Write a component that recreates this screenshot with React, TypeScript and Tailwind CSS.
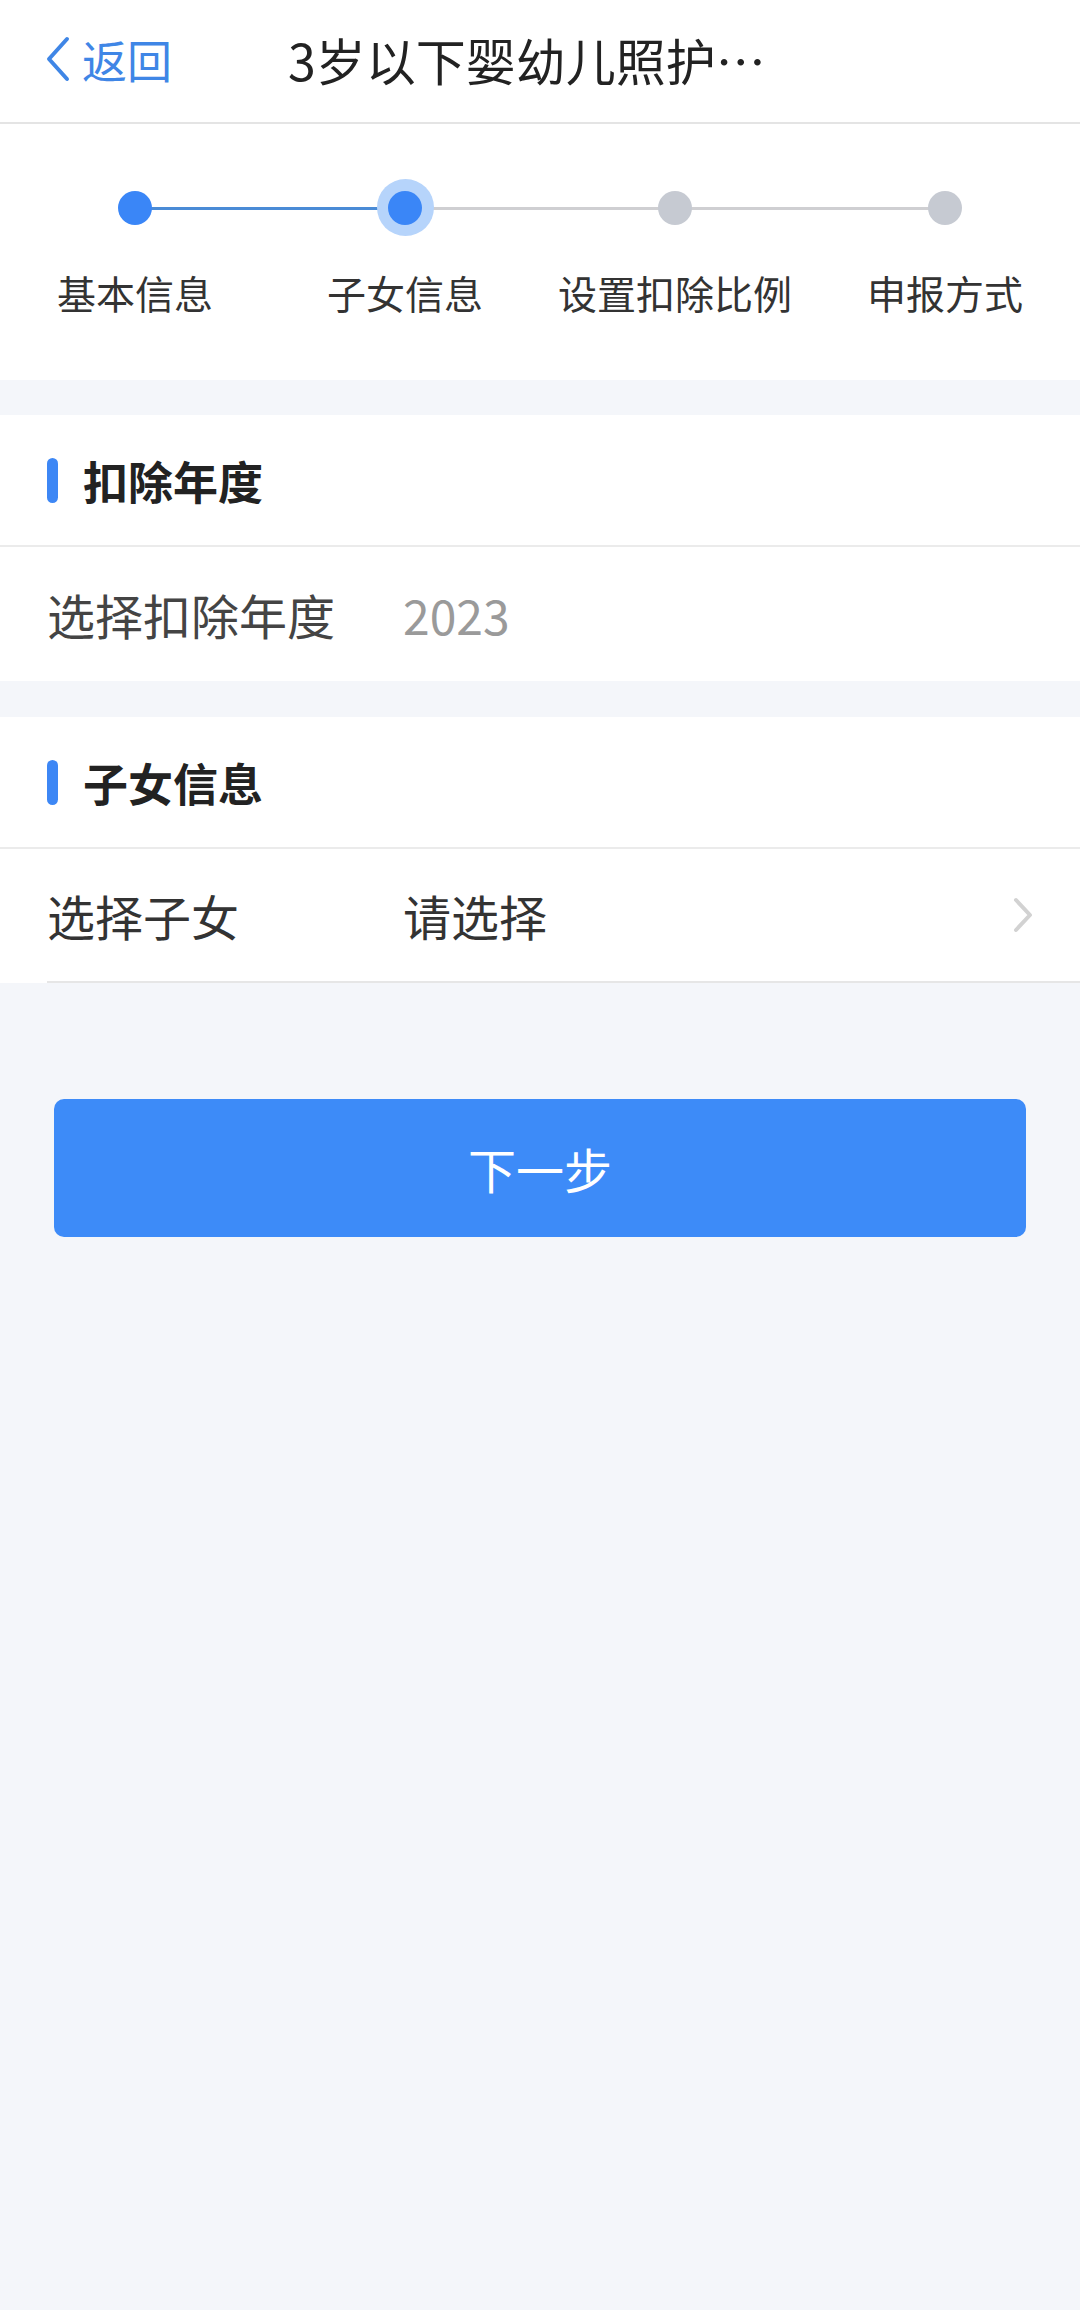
import React from "react";

const FONT = '"Noto Sans CJK SC", "Noto Sans", sans-serif';

const STEPS = ["基本信息", "子女信息", "设置扣除比例", "申报方式"];

const BackChevron = () => (
    <svg width="26" height="46" viewBox="0 0 26 46" fill="none">
        <path d="M23 3 L5 23 L23 43" stroke="#3f86e6" strokeWidth="4" strokeLinecap="round" strokeLinejoin="round" />
    </svg>
);

const RightChevron = () => (
    <svg width="22" height="36" viewBox="0 0 22 36" fill="none">
        <path d="M4 3 L18 18 L4 33" stroke="#d2d2d2" strokeWidth="4" strokeLinecap="round" strokeLinejoin="round" />
    </svg>
);

const Stepper = () => (
    <div className="bg-white h-[256px] pt-[55px]">
        <div className="relative h-[57px]">
            <div className="absolute left-[135px] w-[270px] top-[28px] h-[3px] bg-[#4a8bd6]" />
            <div className="absolute left-[405px] w-[540px] top-[28px] h-[3px] bg-[#cfcfd2]" />
            <div className="relative grid grid-cols-4 h-full">
                {STEPS.map((s, i) => (
                    <div key={s} className="flex items-center justify-center">
                        {i === 1 ? (
                            <div className="w-[57px] h-[57px] rounded-full bg-[#b6d4fb] flex items-center justify-center">
                                <div className="w-[34px] h-[34px] rounded-full bg-[#3a86f7]" />
                            </div>
                        ) : (
                            <div
                                className={
                                    i === 0
                                        ? "w-[34px] h-[34px] rounded-full bg-[#3a86f7]"
                                        : "w-[34px] h-[34px] rounded-full bg-[#c6cad2]"
                                }
                            />
                        )}
                    </div>
                ))}
            </div>
        </div>
        <div className="grid grid-cols-4 mt-[34px]">
            {STEPS.map((s) => (
                <div key={s} className="text-center text-[39px] leading-[44px] text-[#333]">
                    {s}
                </div>
            ))}
        </div>
    </div>
);

const SectionHeader = ({ title }: { title: string }) => (
    <div className="h-[132px] flex items-center pl-[47px] border-b-2 border-[#ebebeb]">
        <div className="w-[11px] h-[45px] rounded-full bg-[#3d87f5]" />
        <div className="ml-[25px] text-[45px] font-bold text-[#222] leading-none">{title}</div>
    </div>
);

export default function App() {
    return (
        <div className="min-h-[2310px] bg-[#f4f6fa]" style={{ fontFamily: FONT }}>
            {/* top bar */}
            <div className="h-[124px] bg-white border-b-2 border-[#e4e4e4] flex items-center pb-[4px]">
                <div className="flex items-center pl-[44px]">
                    <BackChevron />
                    <span className="ml-[12px] text-[45px] text-[#3f86e6] leading-none">返回</span>
                </div>
                <div className="ml-[116px] text-[50px] text-[#222] leading-none whitespace-nowrap">
                    3岁以下婴幼儿照护…
                </div>
            </div>

            <Stepper />

            <div className="mt-[35px] bg-white">
                <SectionHeader title="扣除年度" />
                <div className="h-[134px] flex items-center pl-[47px] text-[48px] leading-none">
                    <span className="w-[356px] text-[#444]">选择扣除年度</span>
                    <span className="text-[#9a9a9a]">2023</span>
                </div>
            </div>

            <div className="mt-[36px] bg-white">
                <SectionHeader title="子女信息" />
                <div className="ml-[47px] h-[134px] flex items-center border-b-2 border-[#e6e6e6] text-[48px] leading-none">
                    <span className="w-[356px] text-[#333]">选择子女</span>
                    <span className="flex-1 text-[#333]">请选择</span>
                    <span className="mr-[46px]">
                        <RightChevron />
                    </span>
                </div>
            </div>

            <div className="px-[54px] mt-[116px]">
                <button className="w-full h-[138px] rounded-[10px] bg-[#3d8bf8] text-white text-[48px] leading-none">
                    下一步
                </button>
            </div>
        </div>
    );
}
